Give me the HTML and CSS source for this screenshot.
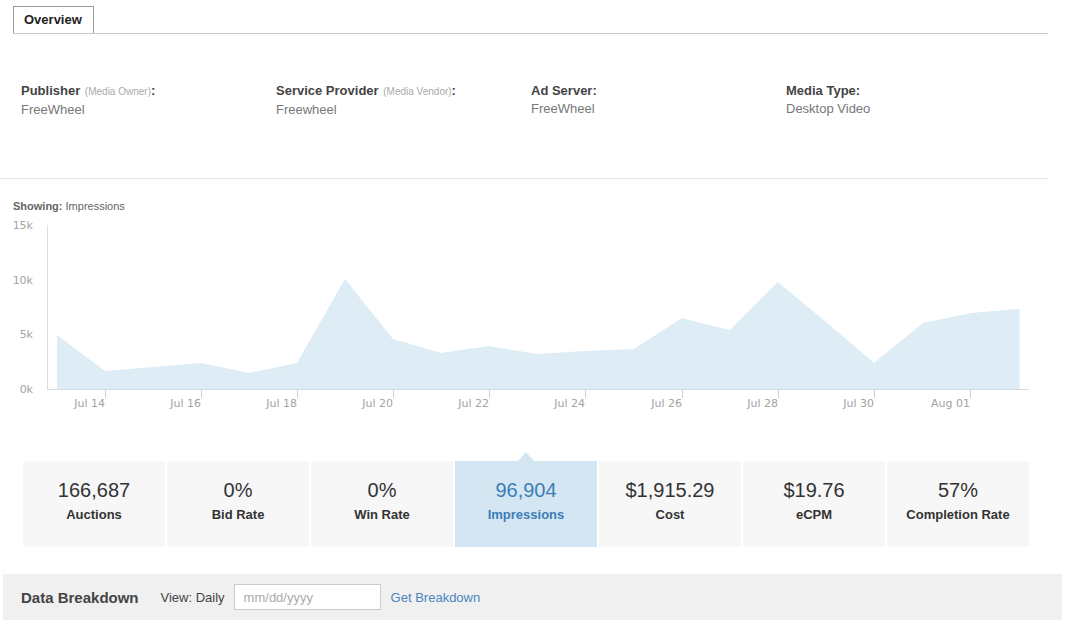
FILE: index.html
```html
<!DOCTYPE html>
<html>
<head>
<meta charset="utf-8">
<title>Overview</title>
<link rel="stylesheet" href="styles.css">
</head>
<body>
<div class="tabbar">
  <div class="tab">Overview</div>
</div>

<div class="info">
  <div class="field">
    <div class="label">Publisher <span class="sub">(Media Owner)</span>:</div>
    <div class="value">FreeWheel</div>
  </div>
  <div class="field">
    <div class="label">Service Provider <span class="sub">(Media Vendor)</span>:</div>
    <div class="value">Freewheel</div>
  </div>
  <div class="field">
    <div class="label">Ad Server:</div>
    <div class="value">FreeWheel</div>
  </div>
  <div class="field">
    <div class="label">Media Type:</div>
    <div class="value">Desktop Video</div>
  </div>
</div>

<div class="sep"></div>

<div class="showing"><b>Showing:</b> Impressions</div>

<svg class="chart" width="1068" height="206" viewBox="0 214 1068 206" xmlns="http://www.w3.org/2000/svg">
  <g class="ylab">
    <text x="33" y="229">15k</text>
    <text x="33" y="284">10k</text>
    <text x="33" y="338">5k</text>
    <text x="33" y="393">0k</text>
  </g>
  <line x1="47.5" y1="225" x2="47.5" y2="389" class="yaxis"/>
  <polygon class="area" points="57,335 105,371 153,367 201,363 249,373 297,363 345,279 393,339 441,353 489,346 537,354 585,351 634,349 682,318 730,330 778,282 826,322 874,363 923,323 971,313 1019.5,309 1019.5,389 57,389"/>
  <line x1="47" y1="389.5" x2="1029" y2="389.5" class="xaxis"/>
  <g class="ticks">
    <line x1="105.5" y1="390" x2="105.5" y2="398"/>
    <line x1="201.5" y1="390" x2="201.5" y2="398"/>
    <line x1="297.5" y1="390" x2="297.5" y2="398"/>
    <line x1="393.5" y1="390" x2="393.5" y2="398"/>
    <line x1="489.5" y1="390" x2="489.5" y2="398"/>
    <line x1="585.5" y1="390" x2="585.5" y2="398"/>
    <line x1="682.5" y1="390" x2="682.5" y2="398"/>
    <line x1="778.5" y1="390" x2="778.5" y2="398"/>
    <line x1="874.5" y1="390" x2="874.5" y2="398"/>
    <line x1="970.5" y1="390" x2="970.5" y2="398"/>
  </g>
  <g class="xlab">
    <text x="105" y="407">Jul 14</text>
    <text x="201" y="407">Jul 16</text>
    <text x="297" y="407">Jul 18</text>
    <text x="393" y="407">Jul 20</text>
    <text x="489" y="407">Jul 22</text>
    <text x="585" y="407">Jul 24</text>
    <text x="682" y="407">Jul 26</text>
    <text x="778" y="407">Jul 28</text>
    <text x="874" y="407">Jul 30</text>
    <text x="970" y="407">Aug 01</text>
  </g>
</svg>

<div class="stats">
  <div class="stat"><div class="num">166,687</div><div class="name">Auctions</div></div>
  <div class="stat"><div class="num">0%</div><div class="name">Bid Rate</div></div>
  <div class="stat"><div class="num">0%</div><div class="name">Win Rate</div></div>
  <div class="stat active"><div class="num">96,904</div><div class="name">Impressions</div></div>
  <div class="stat"><div class="num">$1,915.29</div><div class="name">Cost</div></div>
  <div class="stat"><div class="num">$19.76</div><div class="name">eCPM</div></div>
  <div class="stat"><div class="num">57%</div><div class="name">Completion Rate</div></div>
</div>

<div class="breakdown">
  <span class="bd-title">Data Breakdown</span>
  <span class="bd-view">View: Daily</span>
  <input class="bd-input" type="text" placeholder="mm/dd/yyyy">
  <a class="bd-link" href="#">Get Breakdown</a>
</div>
</body>
</html>
```

FILE: styles.css
```css
html, body {
  margin: 0;
  padding: 0;
  background: #fff;
}
body {
  font-family: "Liberation Sans", Arial, Helvetica, sans-serif;
  color: #444;
  width: 1068px;
}

.tabbar {
  padding-top: 6px;
  margin-left: 13px;
  width: 1035px;
  border-bottom: 1px solid #c8c8c8;
  display: flex;
}
.tab {
  box-sizing: border-box;
  height: 27px;
  border: 1px solid #9a9a9a;
  border-bottom: 0;
  padding: 0 11px 0 10px;
  font-size: 13px;
  font-weight: bold;
  line-height: 25px;
  color: #222;
  background: #fff;
}

.info {
  margin-top: 47px;
  padding-left: 21px;
  display: grid;
  grid-template-columns: repeat(4, 255px);
}
.label {
  font-size: 13px;
  font-weight: bold;
  line-height: 19px;
  color: #444;
}
.sub {
  font-size: 10px;
  font-weight: normal;
  color: #aaa;
  margin-left: 1px;
}
.value {
  font-size: 13px;
  line-height: 18px;
  color: #777;
}

.sep {
  margin-top: 59px;
  height: 1px;
  width: 1048px;
  background: #e6e6e6;
}

.showing {
  margin-top: 21px;
  margin-left: 13px;
  font-size: 11px;
  line-height: 13px;
  color: #666;
}
.showing b {
  color: #666;
}

.chart {
  display: block;
  margin-top: 1px;
}
.chart text {
  font-family: "DejaVu Sans", Verdana, sans-serif;
  font-size: 11px;
  fill: #a3a3a3;
}
.ylab text {
  text-anchor: end;
}
.xlab text {
  text-anchor: end;
}
.yaxis {
  stroke: #dedede;
  stroke-width: 1;
}
.xaxis {
  stroke: #d3dbe3;
  stroke-width: 1;
}
.ticks line {
  stroke: #c4d1de;
  stroke-width: 1;
}
.area {
  fill: #ddecf5;
}

.stats {
  margin-top: 41px;
  margin-left: 23px;
  display: flex;
  gap: 2px;
}
.stat {
  position: relative;
  width: 142px;
  height: 86px;
  background: #f7f7f7;
  text-align: center;
  box-sizing: border-box;
  padding-top: 16px;
  color: #333;
}
.num {
  font-size: 20px;
  line-height: 26px;
}
.name {
  font-size: 13px;
  font-weight: bold;
  line-height: 24px;
}
.stat.active {
  background: #d3e6f1;
  color: #3d7db8;
}
.stat.active::before {
  content: "";
  position: absolute;
  top: -9px;
  left: 63px;
  border-left: 8px solid transparent;
  border-right: 8px solid transparent;
  border-bottom: 9px solid #d3e6f1;
}

.breakdown {
  margin: 27px 6px 0 3px;
  height: 46px;
  background: #f0f0f0;
  display: flex;
  align-items: center;
  padding-left: 18px;
}
.bd-title {
  font-size: 15px;
  font-weight: bold;
  color: #444;
  margin-right: 22px;
}
.bd-view {
  font-size: 13px;
  color: #444;
  margin-right: 9px;
}
.bd-input {
  box-sizing: border-box;
  width: 147px;
  height: 26px;
  border: 1px solid #ccc;
  background: #fff;
  padding: 0 9px;
  font-family: "Liberation Sans", Arial, sans-serif;
  font-size: 13px;
  color: #444;
  margin: 0 10px 0 0;
  outline: none;
}
.bd-input::placeholder {
  color: #aaa;
}
.bd-link {
  font-size: 13px;
  color: #4a86c2;
  text-decoration: none;
}
```
